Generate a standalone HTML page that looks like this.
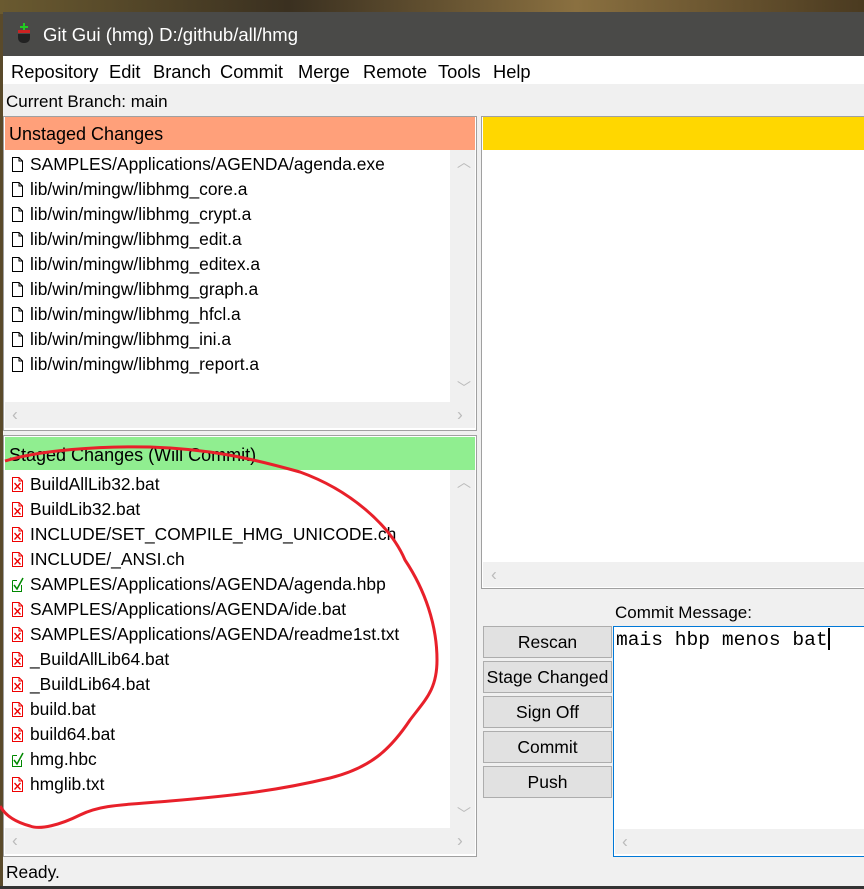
<!DOCTYPE html><html><head><style>
body{margin:0;width:864px;height:889px;overflow:hidden;background:#5a4a2a;font-family:"Liberation Sans",sans-serif;font-size:17.4px;color:#000;position:relative}
.a{position:absolute}
.row{position:absolute;left:11px;height:25px;line-height:25px;white-space:nowrap}
.row svg{vertical-align:-2px;margin-right:6px}
.vs{background:#f0f0f0}
.btn{position:absolute;left:483px;width:127px;height:30px;background:#e1e1e1;border:1px solid #adadad;text-align:center;line-height:31px;font-size:17.5px}
</style></head><body>
<svg width="0" height="0" style="position:absolute"><defs>
<symbol id="d" viewBox="0 0 13 15"><path d="M1.5,0.5 H8 L11.5,4 V14.5 H1.5 Z M8,0.5 V4 H11.5" fill="#fff" stroke="#000"/></symbol>
<symbol id="x" viewBox="0 0 13 15"><path d="M1.5,0.5 H8 L11.5,4 V14.5 H1.5 Z M8,0.5 V4 H11.5" fill="#fff" stroke="#e00"/><path d="M3.5,6 L9.5,12.5 M9.5,6 L3.5,12.5" stroke="#e00" stroke-width="1.3"/></symbol>
<symbol id="c" viewBox="0 0 13 15"><path d="M1.5,3.5 V14.5 H10.5 V8 M1.5,3.5 H6" fill="none" stroke="#080"/><path d="M3,8 L6,12 L12,1" fill="none" stroke="#080" stroke-width="1.5"/></symbol>
</defs></svg>
<div class="a" style="left:0;top:0;width:864px;height:14px;background:linear-gradient(90deg,#6a5a30,#3a3020,#8a7040,#4a3a20)"></div>
<div class="a" style="left:3px;top:12px;width:861px;height:877px;background:#f0f0f0"></div>
<div class="a" style="left:3px;top:12px;width:861px;height:44px;background:#4a4a48;color:#fff;font-size:18.5px;line-height:46px"><span style="position:absolute;left:14px;top:10px;width:16px;height:24px"><span class="a" style="left:3px;top:4px;width:8px;height:2px;background:#2c2"></span><span class="a" style="left:6px;top:1px;width:2px;height:8px;background:#2c2"></span><span class="a" style="left:1px;top:8px;width:12px;height:3px;background:#c22"></span><span class="a" style="left:1px;top:12px;width:12px;height:9px;border-radius:0 0 5px 5px;background:#222"></span></span><span style="position:absolute;left:40px">Git Gui (hmg) D:/github/all/hmg</span></div>
<div class="a" style="left:3px;top:56px;width:861px;height:28px;background:#fff;line-height:31px;font-size:18.3px"><span class="a" style="left:8px">Repository</span><span class="a" style="left:106px">Edit</span><span class="a" style="left:150px">Branch</span><span class="a" style="left:217px">Commit</span><span class="a" style="left:295px">Merge</span><span class="a" style="left:360px">Remote</span><span class="a" style="left:435px">Tools</span><span class="a" style="left:490px">Help</span></div>
<div class="a" style="left:6px;top:92px;font-size:17px">Current Branch: main</div>
<div class="a" style="left:3px;top:116px;width:472px;height:313px;border:1px solid #a0a0a0;background:#fff"></div>
<div class="a" style="left:5px;top:117px;width:470px;height:33px;background:#ffa07a;line-height:35px;font-size:18px"><span style="margin-left:4px">Unstaged Changes</span></div>
<div class="a vs" style="left:450px;top:150px;width:25px;height:252px"></div>
<div class="a vs" style="left:5px;top:402px;width:470px;height:26px"></div>
<div class="a" style="left:457px;top:152px;color:#bbb;font-size:14px">︿</div>
<div class="a" style="left:457px;top:378px;color:#bbb;font-size:14px">﹀</div>
<div class="a" style="left:12px;top:404px;color:#bbb">‹</div><div class="a" style="left:457px;top:404px;color:#bbb">›</div>
<div class="row" style="top:152px"><svg width="13" height="15"><use href="#d"/></svg>SAMPLES/Applications/AGENDA/agenda.exe</div>
<div class="row" style="top:177px"><svg width="13" height="15"><use href="#d"/></svg>lib/win/mingw/libhmg_core.a</div>
<div class="row" style="top:202px"><svg width="13" height="15"><use href="#d"/></svg>lib/win/mingw/libhmg_crypt.a</div>
<div class="row" style="top:227px"><svg width="13" height="15"><use href="#d"/></svg>lib/win/mingw/libhmg_edit.a</div>
<div class="row" style="top:252px"><svg width="13" height="15"><use href="#d"/></svg>lib/win/mingw/libhmg_editex.a</div>
<div class="row" style="top:277px"><svg width="13" height="15"><use href="#d"/></svg>lib/win/mingw/libhmg_graph.a</div>
<div class="row" style="top:302px"><svg width="13" height="15"><use href="#d"/></svg>lib/win/mingw/libhmg_hfcl.a</div>
<div class="row" style="top:327px"><svg width="13" height="15"><use href="#d"/></svg>lib/win/mingw/libhmg_ini.a</div>
<div class="row" style="top:352px"><svg width="13" height="15"><use href="#d"/></svg>lib/win/mingw/libhmg_report.a</div>
<div class="a" style="left:3px;top:435px;width:472px;height:420px;border:1px solid #a0a0a0;background:#fff"></div>
<div class="a" style="left:5px;top:437px;width:470px;height:33px;background:#90ee90;line-height:37px;font-size:18px"><span style="margin-left:4px">Staged Changes (Will Commit)</span></div>
<div class="a vs" style="left:450px;top:470px;width:25px;height:358px"></div>
<div class="a vs" style="left:5px;top:828px;width:470px;height:26px"></div>
<div class="a" style="left:457px;top:472px;color:#bbb;font-size:14px">︿</div>
<div class="a" style="left:457px;top:804px;color:#bbb;font-size:14px">﹀</div>
<div class="a" style="left:12px;top:830px;color:#bbb">‹</div><div class="a" style="left:457px;top:830px;color:#bbb">›</div>
<div class="row" style="top:472px"><svg width="13" height="15"><use href="#x"/></svg>BuildAllLib32.bat</div>
<div class="row" style="top:497px"><svg width="13" height="15"><use href="#x"/></svg>BuildLib32.bat</div>
<div class="row" style="top:522px"><svg width="13" height="15"><use href="#x"/></svg>INCLUDE/SET_COMPILE_HMG_UNICODE.ch</div>
<div class="row" style="top:547px"><svg width="13" height="15"><use href="#x"/></svg>INCLUDE/_ANSI.ch</div>
<div class="row" style="top:572px"><svg width="13" height="15"><use href="#c"/></svg>SAMPLES/Applications/AGENDA/agenda.hbp</div>
<div class="row" style="top:597px"><svg width="13" height="15"><use href="#x"/></svg>SAMPLES/Applications/AGENDA/ide.bat</div>
<div class="row" style="top:622px"><svg width="13" height="15"><use href="#x"/></svg>SAMPLES/Applications/AGENDA/readme1st.txt</div>
<div class="row" style="top:647px"><svg width="13" height="15"><use href="#x"/></svg>_BuildAllLib64.bat</div>
<div class="row" style="top:672px"><svg width="13" height="15"><use href="#x"/></svg>_BuildLib64.bat</div>
<div class="row" style="top:697px"><svg width="13" height="15"><use href="#x"/></svg>build.bat</div>
<div class="row" style="top:722px"><svg width="13" height="15"><use href="#x"/></svg>build64.bat</div>
<div class="row" style="top:747px"><svg width="13" height="15"><use href="#c"/></svg>hmg.hbc</div>
<div class="row" style="top:772px"><svg width="13" height="15"><use href="#x"/></svg>hmglib.txt</div>
<div class="a" style="left:481px;top:116px;width:383px;height:471px;border:1px solid #a0a0a0;border-right:none;background:#fff"></div>
<div class="a" style="left:483px;top:117px;width:381px;height:33px;background:#ffd700"></div>
<div class="a vs" style="left:483px;top:562px;width:381px;height:25px"></div>
<div class="a" style="left:491px;top:564px;color:#bbb">‹</div>
<div class="a" style="left:615px;top:603px;font-size:17px">Commit Message:</div>
<div class="btn" style="top:626px">Rescan</div>
<div class="btn" style="top:661px">Stage Changed</div>
<div class="btn" style="top:696px">Sign Off</div>
<div class="btn" style="top:731px">Commit</div>
<div class="btn" style="top:766px">Push</div>
<div class="a" style="left:613px;top:626px;width:251px;height:229px;border:1px solid #0078d7;border-right:none;background:#fff"></div>
<div class="a vs" style="left:615px;top:829px;width:249px;height:25px"></div>
<div class="a" style="left:622px;top:831px;color:#bbb">‹</div>
<div class="a" style="left:616px;top:628px;font-family:'Liberation Mono',monospace;font-size:19.6px">mais hbp menos bat<span style="display:inline-block;width:2px;height:22px;background:#000;vertical-align:-5px"></span></div>
<div class="a" style="left:6px;top:862px;font-size:17.4px">Ready.</div>
<div class="a" style="left:0;top:886px;width:864px;height:3px;background:#333"></div>
<svg class="a" style="left:0;top:0" width="864" height="889"><path d="M5,461 C40,450 100,446 150,447 C210,449 250,458 300,472 C350,490 390,525 405,560 C425,590 437,625 437,660 C437,690 425,700 410,720 C390,750 370,768 330,778 C280,790 240,795 170,801 C120,805 100,805 80,815 C60,825 40,830 30,826 C15,822 5,815 0,806" fill="none" stroke="#e8202a" stroke-width="3"/></svg>
</body></html>
